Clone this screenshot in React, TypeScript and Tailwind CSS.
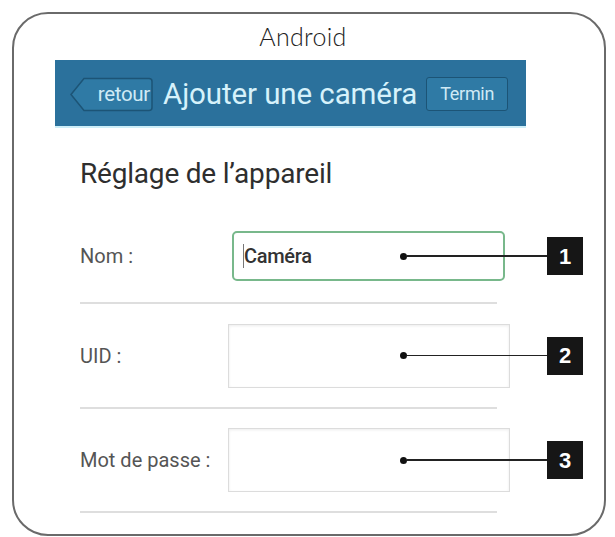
import React from "react";

function Badge({ n }: { n: string }) {
  return (
    <div className="relative z-10 w-[36px] h-[38px] bg-[#161616] flex items-center justify-center text-white text-[22px] font-bold font-['Liberation_Sans',Arial,sans-serif]">
      {n}
    </div>
  );
}

function Pointer() {
  return (
    <div className="absolute left-[320px] top-1/2 -translate-y-1/2 w-[148px] h-[8px] flex items-center pointer-events-none">
      <div className="w-[7px] h-[7px] rounded-full bg-[#111] shrink-0" />
      <div className="flex-1 h-[1.5px] bg-[#222]" />
    </div>
  );
}

export default function App() {
  return (
    <div className="w-[615px] h-[537px] bg-white overflow-hidden font-['Roboto','Noto_Sans',sans-serif]">
      <div className="ml-[12px] mt-[12px] w-[594px] h-[524px] border-2 border-[#6a6a6a] rounded-[36px] flex flex-col">
        <div className="h-[46px] flex items-center justify-center pr-[12px] pb-[2px]">
          <span className="font-['Lato',sans-serif] font-light text-[25px] text-[#222] tracking-[0.3px] leading-none">Android</span>
        </div>
        <div className="ml-[41px] w-[471px] h-[68px] bg-[#2b719c] border-b-2 border-[#cdeef8] flex items-center pl-[15px] pt-[2px]">
          <div className="relative w-[83px] h-[35px] flex items-center justify-end pr-[3px]">
            <svg className="absolute inset-0" width="83" height="35" viewBox="0 0 83 35">
              <path d="M1 17.5 L14 1.5 H79 Q82 1.5 82 4.5 V30.5 Q82 33.5 79 33.5 H14 Z" fill="#2f7aa5" stroke="#1c5476" strokeWidth="1.5" />
            </svg>
            <span className="relative text-[20.5px] text-[#cfeaf5] leading-none tracking-[-0.3px]">retour</span>
          </div>
          <span className="ml-[10px] text-[29.5px] text-[#d6f2fb] leading-none tracking-[-0.1px] pt-[2px]">Ajouter une caméra</span>
          <div className="ml-[9px] w-[82px] h-[34px] rounded-[3px] bg-[#2f7aa5] border-[1.5px] border-[#1c5476] flex items-center justify-center">
            <span className="text-[18px] text-[#cfeaf5] leading-none tracking-[-0.3px]">Termin</span>
          </div>
        </div>
        <div className="pl-[66px] flex flex-col">
          <div className="h-[82px] flex items-center pt-[10px]">
            <span className="text-[28px] text-[#2e2e2e] leading-none tracking-[-0.2px]">Réglage de l’appareil</span>
          </div>
          <div className="relative h-[92px] flex items-center">
            <span className="w-[152px] text-[20px] text-[#555]">Nom :</span>
            <div className="w-[273px] h-[50px] rounded-[5px] border-2 border-[#78b88b] flex items-center pl-[9px]">
              <div className="w-px h-[24px] bg-[#777]" />
              <span className="text-[20px] font-medium text-[#333] tracking-[-0.3px]">Caméra</span>
            </div>
            <div className="ml-[42px]"><Badge n="1" /></div>
            <Pointer />
          </div>
          <div className="w-[417px] h-[2px] bg-[#dedede]" />
          <div className="relative h-[103px] flex items-center">
            <span className="w-[148px] text-[20px] text-[#555]">UID :</span>
            <div className="w-[282px] h-[64px] border border-[#dcdcdc] shadow-[inset_0_1px_3px_rgba(0,0,0,0.08)]" />
            <div className="ml-[37px]"><Badge n="2" /></div>
            <Pointer />
          </div>
          <div className="w-[417px] h-[2px] bg-[#dedede]" />
          <div className="relative h-[102px] flex items-center">
            <span className="w-[148px] text-[20px] text-[#555] whitespace-nowrap">Mot de passe :</span>
            <div className="w-[282px] h-[64px] border border-[#dcdcdc] shadow-[inset_0_1px_3px_rgba(0,0,0,0.08)]" />
            <div className="ml-[37px]"><Badge n="3" /></div>
            <Pointer />
          </div>
          <div className="w-[417px] h-[2px] bg-[#dedede]" />
        </div>
      </div>
    </div>
  );
}
